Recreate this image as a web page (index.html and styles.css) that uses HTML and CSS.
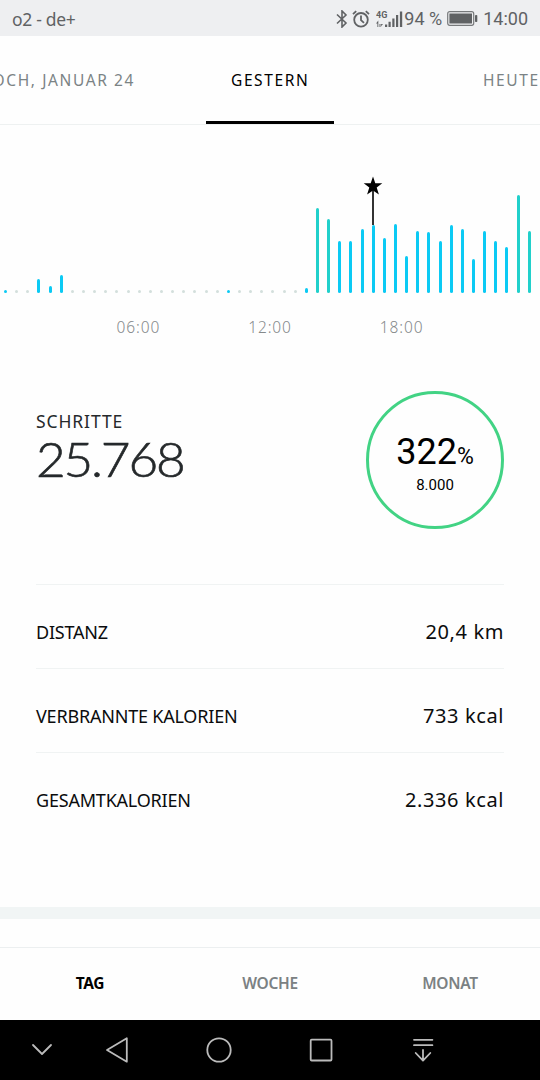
FILE: index.html
```
<!DOCTYPE html>
<html lang="de">
<head>
    <meta charset="UTF-8">
    <meta name="viewport" content="width=device-width, initial-scale=1.0">
    <title>Schritte</title>
    <link rel="stylesheet" href="styles.css">
</head>
<body>

    <header class="status-bar">
        <span class="carrier">o2 - de+</span>
        <div class="status-icons">
            <svg class="icon-bluetooth" width="12" height="18" viewBox="0 0 12 18" fill="none" stroke="#606264" stroke-width="1.6">
                <path d="M1 4.5 10 13 6 17V1l4 4-9 8.5"/>
            </svg>
            <svg class="icon-alarm" width="18" height="18" viewBox="0 0 18 18" fill="none" stroke="#606264" stroke-width="1.8">
                <circle cx="9" cy="9.8" r="6.8"/>
                <path d="M9 5.5v4.6l3 2.8M1 4.2 4.2 1.2M17 4.2l-3.2-3"/>
            </svg>
            <svg class="icon-signal" width="27" height="18" viewBox="0 0 27 18" fill="#606264">
                <text x="0" y="8" class="network">4G</text>
                <path d="M1.4 17v-3.5H0L2.3 10.5v6.5zM4.5 10.5v3.5H3.5v-3.5V17h1.6v-3H7L4.5 17zM9 14.5h2.2V17H9zM12.5 11.8h2.2V17h-2.2zM16.3 8.5h2.2V17h-2.2zM20 5h2.2v12H20zM23.9 1.5h2.3V17h-2.3z"/>
            </svg>
            <span class="battery-level">94 %</span>
            <svg class="icon-battery" width="31" height="15" viewBox="0 0 31 15">
                <rect x=".7" y=".7" width="26" height="13.6" rx="2" fill="none" stroke="#77797b" stroke-width="1.2"/>
                <rect x="2.4" y="2.5" width="22.6" height="10" fill="#606264"/>
                <rect x="28" y="4" width="2.3" height="7" rx=".8" fill="#606264"/>
            </svg>
            <span class="clock">14:00</span>
        </div>
    </header>

    <nav class="days">
        <span class="day day-prev">MITTWOCH, JANUAR 24</span>
        <span class="day day-active">GESTERN</span>
        <span class="day day-next">HEUTE</span>
    </nav>

    <section class="chart">
        <div class="bars" id="bars"></div>
        <div class="hours">
            <span>06:00</span>
            <span>12:00</span>
            <span>18:00</span>
        </div>
    </section>

    <main class="summary">
        <section class="steps">
            <div class="steps-total">
                <h1>SCHRITTE</h1>
                <p>25.768</p>
            </div>
            <div class="goal">
                <div class="goal-percent">322<small>%</small></div>
                <div class="goal-target">8.000</div>
            </div>
        </section>

        <dl class="values">
            <div class="row"><dt>DISTANZ</dt><dd>20,4 km</dd></div>
            <div class="row"><dt>VERBRANNTE KALORIEN</dt><dd>733 kcal</dd></div>
            <div class="row"><dt>GESAMTKALORIEN</dt><dd>2.336 kcal</dd></div>
        </dl>
    </main>

    <div class="divider"></div>

    <nav class="ranges">
        <span class="range range-active">TAG</span>
        <span class="range">WOCHE</span>
        <span class="range">MONAT</span>
    </nav>

    <footer class="android-nav">
        <svg class="nav-hide" width="24" height="30" viewBox="0 0 24 30"><path d="m3 10 9 9 9-9"/></svg>
        <svg width="30" height="30" viewBox="0 0 30 30"><path d="M24.8 3.3v23.4L5 15z"/></svg>
        <svg width="30" height="30" viewBox="0 0 30 30"><circle cx="15" cy="15" r="11.7"/></svg>
        <svg width="30" height="30" viewBox="0 0 30 30"><rect x="4.7" y="4.7" width="20.8" height="20.8" rx="1"/></svg>
        <svg width="30" height="30" viewBox="0 0 30 30"><path d="M6 4.8h18.4M6 10.2h18.4M15 15v10.5M7.7 18l7.3 7.7 7.3-7.7"/></svg>
    </footer>

    <script>
        // Ein Wert pro halbe Stunde, 0 = keine Bewegung
        const values = [
            3, 0, 0, 14, 7, 18, 0, 0, 0, 0, 0, 0,
            0, 0, 0, 0, 0, 0, 0, 0, 3, 0, 0, 0,
            0, 0, 0, 5, 85, 74, 52, 52, 64, 68, 55, 69,
            37, 62, 61, 52, 68, 64, 34, 62, 52, 46, 98, 62
        ];
        const intense = [28, 29, 46, 47];
        const goalIndex = 33;

        const bars = document.getElementById('bars');

        values.forEach((value, i) => {
            const slot = document.createElement('div');
            const bar = document.createElement('div');
            slot.className = 'slot';
            bar.className = 'bar';
            bar.style.height = `${value || 3}px`;

            if (value === 0) bar.classList.add('bar-empty');
            if (intense.includes(i)) bar.classList.add('bar-intense');
            if (i === goalIndex) {
                slot.innerHTML = `<svg class="goal-marker" width="20" height="49" viewBox="0 0 20 49">
                    <path d="M9 10h2v39H9z" fill="#333"/>
                    <path d="m10 .5 2.3 6.7h7l-5.6 4.3 2.2 7L10 14.4l-5.9 4.1 2.2-7L.7 7.2h7z"/>
                </svg>`;
            }
            slot.appendChild(bar);
            bars.appendChild(slot);
        });
    </script>
</body>
</html>
```
FILE: styles.css
```
* {
    box-sizing: border-box;
}

body {
    display: flex;
    flex-direction: column;
    width: 540px;
    height: 1080px;
    margin: 0;
    overflow: hidden;
    background-color: #fefefe;
    font-family: "Noto Sans", sans-serif;
    color: #0b0c0d;
    white-space: nowrap;
}

h1, p, dl, dt, dd {
    margin: 0;
    font-weight: 400;
}

/* Statusleiste */
.status-bar {
    display: flex;
    flex: none;
    justify-content: space-between;
    align-items: center;
    height: 36px;
    padding: 1px 12px 0;
    background-color: #eeeff1;
    color: #606264;
    font-size: 17.5px;
}

.carrier { letter-spacing: -0.3px; }

.status-icons {
    display: flex;
    align-items: center;
    font-family: Roboto, sans-serif;
    font-size: 18px;
}

.icon-alarm { margin-left: 4px; }
.icon-signal { margin: 0 1px 0 6px; }
.icon-battery { margin: 0 5px; }
.network { font: bold 9px Roboto, sans-serif; }

/* Tage */
.days {
    display: grid;
    flex: none;
    grid-template-columns: 206px 128px 206px;
    height: 89px;
    border-bottom: 1px solid #eef1f1;
    font-size: 15.5px;
    letter-spacing: 1.6px;
    line-height: 88px;
}

.day { color: #7b8385; }

.day-prev {
    display: flex;
    justify-content: flex-end;
    padding-right: 71px;
}

.day-active {
    height: 88px;
    padding-left: 25px;
    border-bottom: 3px solid #000;
    color: #000;
}

.day-next { padding-left: 149px; }

/* Diagramm */
.chart {
    flex: none;
    height: 247px;
    padding-top: 48px;
}

.bars {
    display: flex;
    width: 534.7px;
    height: 120px;
}

.slot {
    display: flex;
    flex: 1;
    flex-direction: column;
    justify-content: flex-end;
    align-items: center;
    min-width: 0;
}

.bar {
    flex: none;
    width: 3px;
    border-radius: 1.5px;
    background-color: #0bcaf4;
}

.bar-empty { background-color: #d3dfdc; }
.bar-intense { background-color: #21d0cb; }
.goal-marker { flex: none; }

.hours {
    display: flex;
    justify-content: center;
    gap: 88px;
    margin-top: 23px;
    color: #85898b;
    font-size: 15.5px;
    font-weight: 350;
    letter-spacing: 0.9px;
    line-height: 22px;
}

/* Schritte und Ziel */
.summary { padding: 0 36px; }

.steps {
    display: flex;
    justify-content: space-between;
    height: 212px;
    padding-top: 19px;
}

.steps-total {
    padding-top: 18px;
    color: #25292b;
}

.steps-total h1 {
    font-size: 17.5px;
    letter-spacing: 0.9px;
    line-height: 24px;
}

.steps-total p {
    font-family: Lato, sans-serif;
    font-size: 47px;
    font-weight: 300;
    letter-spacing: -2px;
    line-height: 52px;
    transform: scaleX(1.09);
    transform-origin: left center;
    -webkit-text-stroke: 0.6px #25292b;
}

.goal {
    width: 138px;
    height: 138px;
    padding-top: 37px;
    border: 3px solid #42d384;
    border-radius: 50%;
    color: #000;
    font-family: Roboto, sans-serif;
    text-align: center;
}

.goal-percent {
    height: 42px;
    font-size: 36px;
    line-height: 42px;
}

.goal-percent small { font-size: 23px; }

.goal-target {
    font-size: 15px;
    line-height: 24px;
}

.row {
    display: flex;
    justify-content: space-between;
    height: 84px;
    padding-top: 12px;
    border-top: 1px solid #f0f3f3;
    line-height: 70px;
}

.row dt {
    font-size: 18px;
    letter-spacing: -0.2px;
}

.row dd {
    font-size: 20px;
    letter-spacing: 0.6px;
}

.divider {
    flex: none;
    height: 12px;
    margin-top: 71px;
    background-color: #f1f5f5;
}

/* Zeitraum */
.ranges {
    display: grid;
    flex: none;
    grid-template-columns: repeat(3, 1fr);
    height: 73px;
    margin-top: 28px;
    border-top: 1px solid #eceff0;
    color: #7b8183;
    font-size: 15.5px;
    font-weight: 600;
    letter-spacing: -0.3px;
    line-height: 71px;
    text-align: center;
}

.range-active {
    color: #000;
    font-weight: 700;
}

/* Navigationsleiste */
.android-nav {
    display: flex;
    flex: none;
    align-items: center;
    gap: 72px;
    height: 60px;
    padding-left: 30px;
    background-color: #000;
}

.android-nav svg {
    fill: none;
    stroke: #bbb;
    stroke-width: 1.8;
    stroke-linecap: round;
    stroke-linejoin: round;
}

.nav-hide { margin-right: -24px; }
```
